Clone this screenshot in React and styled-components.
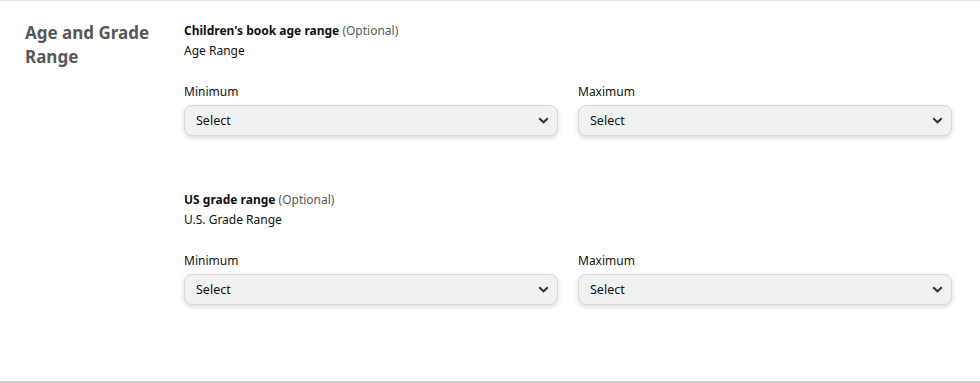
import React from 'react'
import styled, { createGlobalStyle } from 'styled-components'

const GlobalStyle = createGlobalStyle`
  html, body {
    margin: 0;
    padding: 0;
    background: #fff;
  }
  body {
    font-family: "Noto Sans", Arial, sans-serif;
    color: #0f1111;
  }
`

const Section = styled.section`
  display: grid;
  grid-template-columns: 184px 1fr;
  border-top: 1px solid #e7e7e7;
  border-bottom: 2px solid #cccccc;
  height: 383px;
  box-sizing: border-box;
  padding: 20px 28px 0 0;
`

const Heading = styled.h2`
  margin: 0;
  padding-left: 25px;
  width: 140px;
  font-size: 17px;
  line-height: 24px;
  font-weight: 700;
  color: #565959;
`

const Fields = styled.div`
  display: flex;
  flex-direction: column;
  gap: 54px;
`

const Group = styled.div`
  display: flex;
  flex-direction: column;
`

const Title = styled.div`
  font-size: 12px;
  line-height: 20px;
  font-weight: 700;
`

const Optional = styled.span`
  font-weight: 400;
  color: #565959;
`

const Sub = styled.div`
  font-size: 12px;
  line-height: 20px;
  margin-bottom: 21px;
`

const Row = styled.div`
  display: grid;
  grid-template-columns: 1fr 1fr;
  gap: 20px;
`

const Field = styled.label`
  display: flex;
  flex-direction: column;
  gap: 3px;
  font-size: 12px;
  line-height: 20px;
`

const Dropdown = styled.div`
  display: flex;
  align-items: center;
  justify-content: space-between;
  height: 31px;
  box-sizing: border-box;
  padding: 0 8px 0 11px;
  background: #f0f2f2;
  border: 1px solid #d5d9d9;
  border-radius: 8px;
  box-shadow: 0 2px 5px rgba(15, 17, 17, 0.15);
  font-size: 12.5px;
  color: #0f1111;
`

const Chevron = () => (
  <svg width="11" height="7" viewBox="0 0 11 7">
    <path d="M1.2 1.2 L5.5 5.3 L9.8 1.2" fill="none" stroke="#333" strokeWidth="2" />
  </svg>
)

const Select = ({ label }) => (
  <Field>
    {label}
    <Dropdown>
      Select
      <Chevron />
    </Dropdown>
  </Field>
)

const RangeGroup = ({ title, sub }) => (
  <Group>
    <Title>
      {title} <Optional>(Optional)</Optional>
    </Title>
    <Sub>{sub}</Sub>
    <Row>
      <Select label="Minimum" />
      <Select label="Maximum" />
    </Row>
  </Group>
)

export default function App() {
  return (
    <>
      <GlobalStyle />
      <Section>
        <Heading>Age and Grade Range</Heading>
        <Fields>
          <RangeGroup title="Children's book age range" sub="Age Range" />
          <RangeGroup title="US grade range" sub="U.S. Grade Range" />
        </Fields>
      </Section>
    </>
  )
}
